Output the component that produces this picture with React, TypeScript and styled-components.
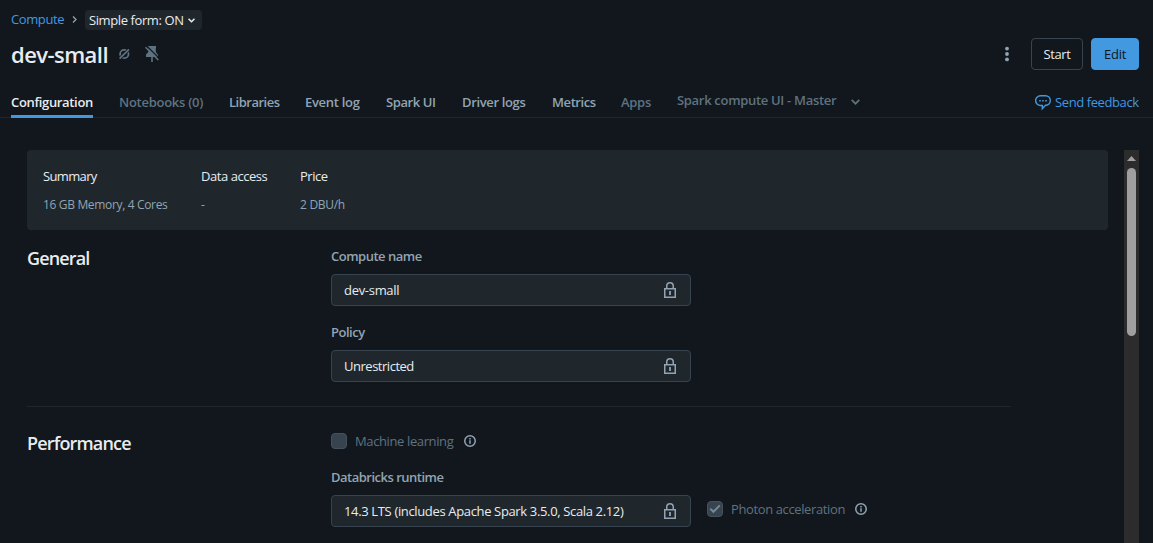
import React from "react";
import styled, { createGlobalStyle } from "styled-components";

const color = {
  bg: "#11171c",
  panel: "#1f272d",
  border: "#37444f",
  rule: "#1f272d",
  text: "#e8ecf0",
  secondary: "#92a4b3",
  muted: "#5f7281",
  blue: "#4299e0",
};

const GlobalStyle = createGlobalStyle`
  * { box-sizing: border-box; }
  body {
    margin: 0;
    background: ${color.bg};
    color: ${color.text};
    font: 13px/20px "Segoe UI", "Open Sans", "Noto Sans", sans-serif;
    overflow: hidden;
  }
  h1, h2 { margin: 0; }
  button { font: inherit; }
  svg { display: block; flex: none; }
`;

const Page = styled.div`
  height: 543px;
  display: flex;
  flex-direction: column;
  overflow: hidden;
`;

/* A run of text on one line, with a fixed advance so neighbours stay put. */
const Label = styled.span<{ $w?: number; $ls?: number }>`
  display: block;
  flex: none;
  white-space: nowrap;
  width: ${(p) => (p.$w ? `${p.$w}px` : "auto")};
  letter-spacing: ${(p) => p.$ls ?? -0.4}px;
`;

const Breadcrumb = styled.nav`
  display: flex;
  height: 30px;
  padding: 9px 0 0 11px;
`;

const Crumb = styled.a`
  color: ${color.blue};
  text-decoration: none;
`;

const CrumbArrow = styled.div`
  width: 21px;
  padding: 7px 0 0 8px;
  color: ${color.secondary};
`;

const Chip = styled.button`
  display: flex;
  align-items: center;
  width: 117px;
  height: 20px;
  margin-top: 1px;
  padding: 0 0 0 4px;
  border: 0;
  border-radius: 4px;
  background: ${color.panel};
  color: ${color.text};
  text-align: left;
`;

const Header = styled.header`
  display: flex;
  align-items: center;
  height: 48px;
  padding: 0 14px 0 11px;
`;

const Title = styled.h1`
  font-size: 22px;
  line-height: 28px;
  font-weight: 600;
`;

const TitleIcon = styled.span<{ $ml: number }>`
  margin: -1px 0 0 ${(p) => p.$ml}px;
  color: ${color.muted};
`;

const Actions = styled.div`
  display: flex;
  align-items: center;
  gap: 8px;
  margin-left: auto;
`;

const Kebab = styled.span`
  margin-right: 8px;
  color: ${color.secondary};
`;

const Button = styled.button<{ $primary?: boolean; $w: number }>`
  display: flex;
  align-items: center;
  justify-content: center;
  width: ${(p) => p.$w}px;
  height: 32px;
  padding: 0;
  border-radius: 4px;
  border: 1px solid ${(p) => (p.$primary ? color.blue : color.border)};
  background: ${(p) => (p.$primary ? color.blue : "transparent")};
  color: ${(p) => (p.$primary ? color.bg : color.text)};
`;

const TabBar = styled.div`
  display: flex;
  gap: 26px;
  height: 40px;
  padding: 0 14px 0 11px;
  background: linear-gradient(${color.rule}, ${color.rule}) 0 39px / 100% 1px no-repeat;
`;

const Tab = styled.div<{ $active?: boolean; $disabled?: boolean }>`
  height: 40px;
  padding-top: 14px;
  font-weight: 600;
  color: ${(p) => (p.$active ? color.text : p.$disabled ? color.muted : color.secondary)};
  border-bottom: 3px solid ${(p) => (p.$active ? color.blue : "transparent")};
`;

const TabMenu = styled(Tab)`
  display: flex;
  padding-top: 12px;
  gap: 15px;
  svg { margin-top: 9px; }
`;

const Feedback = styled.a`
  display: flex;
  gap: 4px;
  margin-left: auto;
  padding-top: 14px;
  color: ${color.blue};
  svg { margin-top: 3px; }
`;

const Body = styled.main`
  flex: 1;
  min-height: 0;
  display: flex;
  justify-content: space-between;
  padding: 32px 14px 0 27px;
`;

const Content = styled.div`
  width: 1081px;
`;

const Summary = styled.section`
  display: flex;
  gap: 33px;
  height: 80px;
  padding: 16px;
  border-radius: 4px;
  background: ${color.panel};
`;

const Stat = styled.div<{ $w: number }>`
  display: flex;
  flex-direction: column;
  gap: 9px;
  width: ${(p) => p.$w}px;
`;

const StatValue = styled.div`
  font-size: 12px;
  line-height: 20px;
  color: ${color.secondary};
`;

const Section = styled.section<{ $h: number; $pt: number }>`
  display: flex;
  width: 984px;
  height: ${(p) => p.$h}px;
  padding-top: ${(p) => p.$pt}px;
  border-bottom: 1px solid ${color.rule};
`;

const SectionTitle = styled.h2`
  width: 304px;
  font-size: 18px;
  line-height: 24px;
  font-weight: 600;
`;

const Fields = styled.div`
  display: flex;
  flex-direction: column;
  gap: 16px;
`;

const FieldLabel = styled.div`
  height: 28px;
  font-weight: 600;
  color: ${color.secondary};
`;

const Input = styled.div`
  display: flex;
  align-items: center;
  justify-content: space-between;
  width: 360px;
  height: 32px;
  padding: 0 12px;
  border: 1px solid ${color.border};
  border-radius: 4px;
  background: ${color.panel};
  svg { color: ${color.secondary}; }
`;

const Row = styled.div`
  display: flex;
  align-items: center;
  gap: 16px;
`;

const Check = styled.div`
  display: flex;
  align-items: center;
  height: 20px;
  color: ${color.muted};
`;

const RuntimeCheck = styled(Check)`
  margin-top: -4px;
`;

const Box = styled.span`
  display: flex;
  align-items: center;
  justify-content: center;
  width: 16px;
  height: 16px;
  margin-right: 8px;
  border: 1px solid #45525d;
  border-radius: 4px;
  background: ${color.border};
`;

const InfoSlot = styled.span`
  margin-left: 10px;
  color: ${color.secondary};
`;

const ScrollTrack = styled.div`
  display: flex;
  flex-direction: column;
  align-items: center;
  width: 15px;
  padding-top: 6px;
  background: #2c2c2c;
`;

const ScrollThumb = styled.div`
  width: 9px;
  height: 168px;
  margin-top: 7px;
  border-radius: 5px;
  background: #9f9f9f;
`;

const Chevron = ({ w = 8, h = 5, sw = 1.5 }: { w?: number; h?: number; sw?: number }) => (
  <svg width={w} height={h} viewBox="0 0 8 5" fill="none" stroke="currentColor" strokeWidth={sw}>
    <path d="M.6.6 4 4 7.4.6" />
  </svg>
);

const LockIcon = () => (
  <svg width="16" height="16" viewBox="0 0 16 16" fill="none" stroke="currentColor" strokeWidth="1.5">
    <path d="M2.75 6.75h10.5v8.5H2.75zM4.75 6.75V4a3.25 3.25 0 0 1 6.5 0v2.75" />
    <path d="M8 9v4" strokeWidth="1.8" />
  </svg>
);

const InfoIcon = () => (
  <svg width="12" height="12" viewBox="0 0 12 12" fill="none" stroke="currentColor" strokeWidth="1.5">
    <circle cx="6" cy="6" r="5.25" />
    <path d="M6 5.3v3.5M6 3v1.5" />
  </svg>
);

const Field = ({ label, value, ls, extra }: {
  label: string; value: string; ls?: number; extra?: React.ReactNode;
}) => (
  <div>
    <FieldLabel><Label $ls={-0.5}>{label}</Label></FieldLabel>
    <Row>
      <Input><Label $ls={ls}>{value}</Label><LockIcon /></Input>
      {extra}
    </Row>
  </div>
);

const tabs = [
  { name: "Configuration", w: 82, active: true, ls: -0.34 },
  { name: "Notebooks (0)", w: 84, disabled: true, ls: -0.27 },
  { name: "Libraries", w: 50, ls: -0.5 },
  { name: "Event log", w: 55, ls: -0.3 },
  { name: "Spark UI", w: 50, ls: -0.4 },
  { name: "Driver logs", w: 64, ls: -0.35 },
  { name: "Metrics", w: 43, ls: -0.42 },
  { name: "Apps", w: 30, disabled: true, ls: -0.3 },
];

export default function App() {
  return (
    <>
      <GlobalStyle />
      <Page>
        <Breadcrumb>
          <Crumb><Label $w={53}>Compute</Label></Crumb>
          <CrumbArrow>
            <svg width="5" height="7" viewBox="0 0 5 7" fill="none" stroke="currentColor" strokeWidth="1.3">
              <path d="M1 .5 4 3.5 1 6.5" />
            </svg>
          </CrumbArrow>
          <Chip><Label $w={99}>Simple form: ON</Label><Chevron w={7} h={5} sw={1.7} /></Chip>
        </Breadcrumb>
        <Header>
          <Title><Label $w={97} $ls={-0.55}>dev-small</Label></Title>
          <TitleIcon $ml={11}>
            <svg width="11" height="12" viewBox="0 0 11 12" fill="none" stroke="currentColor">
              <circle cx="5.3" cy="6" r="4.2" strokeWidth="1.8" />
              <path d="M0 11.3 10.6.7" stroke={color.bg} strokeWidth="3.2" />
              <path d="M.6 10.7 10 1.3" strokeWidth="1.7" />
            </svg>
          </TitleIcon>
          <TitleIcon $ml={15}>
            <svg width="14" height="16" viewBox="0 0 14 16" fill="currentColor">
              <path d="M3 0h8v2h-.2v4L13 9v2H7.8v5H6.2v-5H1V8.6L3.4 6V2H3z" />
              <path d="M1.4-.4 14.2 12.2" stroke={color.bg} strokeWidth="1.2" />
              <path d="M.5 1.2 13.4 14" stroke="currentColor" strokeWidth="1.6" />
            </svg>
          </TitleIcon>
          <Actions>
            <Kebab>
              <svg width="16" height="16" viewBox="0 0 16 16" fill="currentColor">
                <circle cx="8" cy="2.6" r="1.9" /><circle cx="8" cy="8" r="1.9" /><circle cx="8" cy="13.4" r="1.9" />
              </svg>
            </Kebab>
            <Button $w={52}><Label>Start</Label></Button>
            <Button $w={48} $primary><Label $ls={-0.25}>Edit</Label></Button>
          </Actions>
        </Header>
        <TabBar>
          {tabs.map((t) => (
            <Tab key={t.name} $active={t.active} $disabled={t.disabled}>
              <Label $w={t.w} $ls={t.ls}>{t.name}</Label>
            </Tab>
          ))}
          <TabMenu $disabled><Label $w={159} $ls={-0.31}>Spark compute UI - Master</Label><Chevron w={9} h={6} /></TabMenu>
          <Feedback>
            <svg width="16" height="16" viewBox="0 0 16 16" fill="none" stroke="currentColor" strokeWidth="1.4">
              <path d="M5.5.7h5a4.8 4.8 0 0 1 0 9.6L7.3 13.8v-3.3H5.5a4.8 4.8 0 0 1 0-9.8Z" />
              <path d="M4.2 5.8h1.6M7.2 5.8h1.6M10.2 5.8h1.6" strokeWidth="1.5" />
            </svg>
            <Label $w={84}>Send feedback</Label>
          </Feedback>
        </TabBar>
        <Body>
          <Content>
            <Summary>
              <Stat $w={125}>
                <Label $ls={-0.65}>Summary</Label>
                <StatValue><Label $ls={-0.34}>16 GB Memory, 4 Cores</Label></StatValue>
              </Stat>
              <Stat $w={66}>
                <Label $ls={-0.45}>Data access</Label>
                <StatValue>-</StatValue>
              </Stat>
              <Stat $w={60}>
                <Label $ls={-0.45}>Price</Label>
                <StatValue><Label $ls={-0.3}>2 DBU/h</Label></StatValue>
              </Stat>
            </Summary>
            <Section $h={177} $pt={16}>
              <SectionTitle><Label $ls={-0.85}>General</Label></SectionTitle>
              <Fields>
                <Field label="Compute name" value="dev-small" ls={-0.3} />
                <Field label="Policy" value="Unrestricted" ls={-0.48} />
              </Fields>
            </Section>
            <Section $h={200} $pt={24}>
              <SectionTitle><Label $ls={-0.83}>Performance</Label></SectionTitle>
              <Fields>
                <Check>
                  <Box /><Label $w={99} $ls={-0.38}>Machine learning</Label><InfoSlot><InfoIcon /></InfoSlot>
                </Check>
                <Field
                  label="Databricks runtime"
                  value="14.3 LTS (includes Apache Spark 3.5.0, Scala 2.12)"
                  ls={-0.35}
                  extra={
                    <RuntimeCheck>
                      <Box>
                        <svg width="12" height="10" viewBox="0 0 12 10" fill="none" stroke="#778997" strokeWidth="2">
                          <path d="M1.2 4.6 4.4 7.8 10.8 1.4" />
                        </svg>
                      </Box>
                      <Label $w={114} $ls={-0.38}>Photon acceleration</Label><InfoSlot><InfoIcon /></InfoSlot>
                    </RuntimeCheck>
                  }
                />
              </Fields>
            </Section>
          </Content>
          <ScrollTrack>
            <svg width="9" height="5" viewBox="0 0 9 5" fill="#9f9f9f"><path d="M4.5 0 9 5H0z" /></svg>
            <ScrollThumb />
          </ScrollTrack>
        </Body>
      </Page>
    </>
  );
}
